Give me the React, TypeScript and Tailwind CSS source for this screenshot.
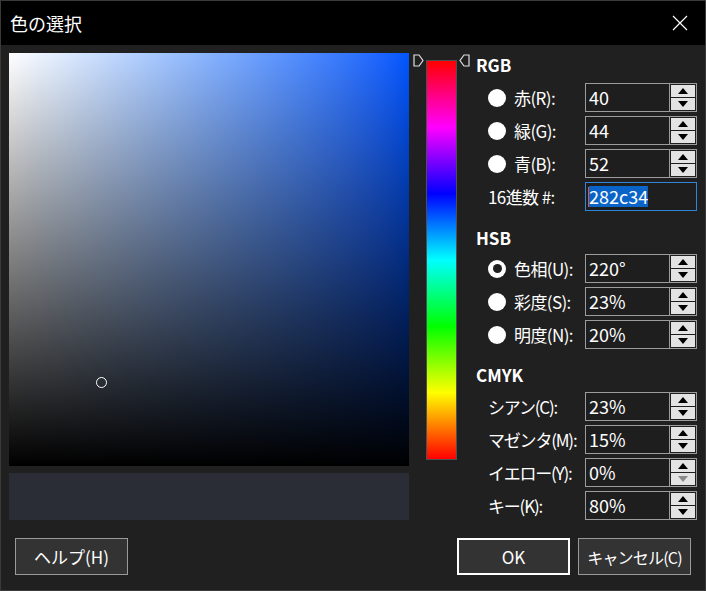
import React from "react";

const font = { fontFamily: '"Noto Sans CJK JP", "Noto Sans", sans-serif' };

function Spinner({ dimDown }: { dimDown?: boolean }) {
  return (
    <div className="flex flex-col w-[27px] h-[29px] shrink-0 border border-[#9c9c9c] border-l-0 bg-[#1e1e1e] p-[1px] gap-[1px]">
      <div className="flex-1 bg-[#e3e3e3] flex items-center justify-center">
        <svg width="10" height="6" viewBox="0 0 10 6"><path d="M5 0L10 6H0z" fill="#000" /></svg>
      </div>
      <div className="flex-1 bg-[#e3e3e3] flex items-center justify-center">
        <svg width="10" height="6" viewBox="0 0 10 6"><path d="M0 0H10L5 6z" fill={dimDown ? "#8a8a8a" : "#000"} /></svg>
      </div>
    </div>
  );
}

function Radio({ checked }: { checked?: boolean }) {
  return (
    <span className="w-[18px] h-[18px] rounded-full bg-white flex items-center justify-center shrink-0">
      {checked && <span className="w-[9px] h-[9px] rounded-full bg-[#1f1f1f]" />}
    </span>
  );
}

function Row({ label, value, radio, checked, dimDown }: { label: string; value: string; radio?: boolean; checked?: boolean; dimDown?: boolean }) {
  return (
    <div className="flex items-center h-[29px] mb-[4px]">
      <div className="w-[109px] shrink-0 pl-[12px] flex items-center gap-[8px] text-[17px] text-white">
        {radio && <Radio checked={checked} />}
        <span className={radio ? "whitespace-nowrap tracking-[-0.6px]" : "whitespace-nowrap tracking-[-1.2px]"}>{label}</span>
      </div>
      <div className="w-[85px] shrink-0 h-[29px] border border-[#9c9c9c] bg-[#1e1e1e] text-white text-[18px] pl-[3px] flex items-center">
        {value}
      </div>
      <Spinner dimDown={dimDown} />
    </div>
  );
}

export default function App() {
  return (
    <div style={font} className="w-[706px] h-[591px] bg-[#202020] flex flex-col border border-[#3a3a3a] overflow-hidden">
      <div className="h-[44px] bg-black flex items-center justify-between pl-[9px] pr-[17px] shrink-0">
        <span className="text-white text-[18px]">色の選択</span>
        <svg width="16" height="16" viewBox="0 0 16 16">
          <path d="M1 1L15 15M15 1L1 15" stroke="#fff" strokeWidth="1.2" />
        </svg>
      </div>

      <div className="flex pt-[8px] pl-[8px]">
        <div className="w-[400px] shrink-0 flex flex-col gap-[7px]">
          <div className="relative h-[413px] bg-linear-to-r from-white to-[#0055ff]">
            <div className="absolute inset-0 bg-linear-to-t from-black to-transparent" />
            <div className="absolute left-[87px] top-[324px] w-[11px] h-[11px] rounded-full border border-white" />
          </div>
          <div className="h-[47px] bg-[#2a2d35]" />
        </div>

        <div className="relative w-[60px] h-[413px] shrink-0">
          <div className="absolute left-[17px] top-[7px] w-[31px] h-[400px] border border-[#505050] bg-[linear-gradient(to_bottom,#ff0000,#ff00ff,#0000ff,#00ffff,#00ff00,#ffff00,#ff0000)]" />
          <svg className="absolute left-[4px] top-[1px]" width="11" height="13" viewBox="0 0 11 13">
            <path d="M1 1H6L10 6.5L6 12H1z" fill="#1f1f1f" stroke="#e0e0e0" strokeWidth="1.2" />
          </svg>
          <svg className="absolute left-[50px] top-[1px]" width="11" height="13" viewBox="0 0 11 13">
            <path d="M10 1H5L1 6.5L5 12H10z" fill="#1f1f1f" stroke="#e0e0e0" strokeWidth="1.2" />
          </svg>
        </div>

        <div className="flex flex-col w-[230px] shrink-0 pl-[7px]">
          <div className="h-[24px] flex items-center text-white font-bold text-[17px]">RGB</div>
          <div className="mt-[6px]">
            <Row radio label="赤(R):" value="40" />
            <Row radio label="緑(G):" value="44" />
            <Row radio label="青(B):" value="52" />
            <div className="flex items-center h-[29px]">
              <div className="w-[109px] shrink-0 pl-[12px] text-[17px] text-white whitespace-nowrap tracking-[-0.6px]">16進数 #:</div>
              <div className="w-[112px] shrink-0 h-[29px] border border-[#2f86d9] bg-[#1e1e1e] flex items-center pl-[2px]">
                <span className="w-[1px] h-[20px] bg-[#e05050]" />
                <span className="bg-[#0a64c8] text-white text-[18px] leading-[21px]">282c34</span>
              </div>
            </div>
          </div>

          <div className="h-[24px] mt-[15px] flex items-center text-white font-bold text-[17px]">HSB</div>
          <div className="mt-[4px]">
            <Row radio checked label="色相(U):" value="220°" />
            <Row radio label="彩度(S):" value="23%" />
            <Row radio label="明度(N):" value="20%" />
          </div>

          <div className="h-[24px] mt-[10px] flex items-center text-white font-bold text-[17px]">CMYK</div>
          <div className="mt-[5px]">
            <Row label="シアン(C):" value="23%" />
            <Row label="マゼンタ(M):" value="15%" />
            <Row label="イエロー(Y):" value="0%" dimDown />
            <Row label="キー(K):" value="80%" />
          </div>
        </div>
      </div>

      <div className="flex items-center mt-[14px] pl-[14px] pr-[14px]">
        <button className="w-[113px] h-[37px] bg-[#333333] border border-[#9a9a9a] text-white text-[17px]">ヘルプ(H)</button>
        <div className="flex-1" />
        <button className="w-[113px] h-[37px] bg-[#333333] border-2 border-white text-white text-[17px]">OK</button>
        <button className="w-[113px] h-[37px] ml-[8px] bg-[#333333] border border-[#9a9a9a] text-white text-[16px] tracking-[-0.8px]">キャンセル(C)</button>
      </div>
    </div>
  );
}
